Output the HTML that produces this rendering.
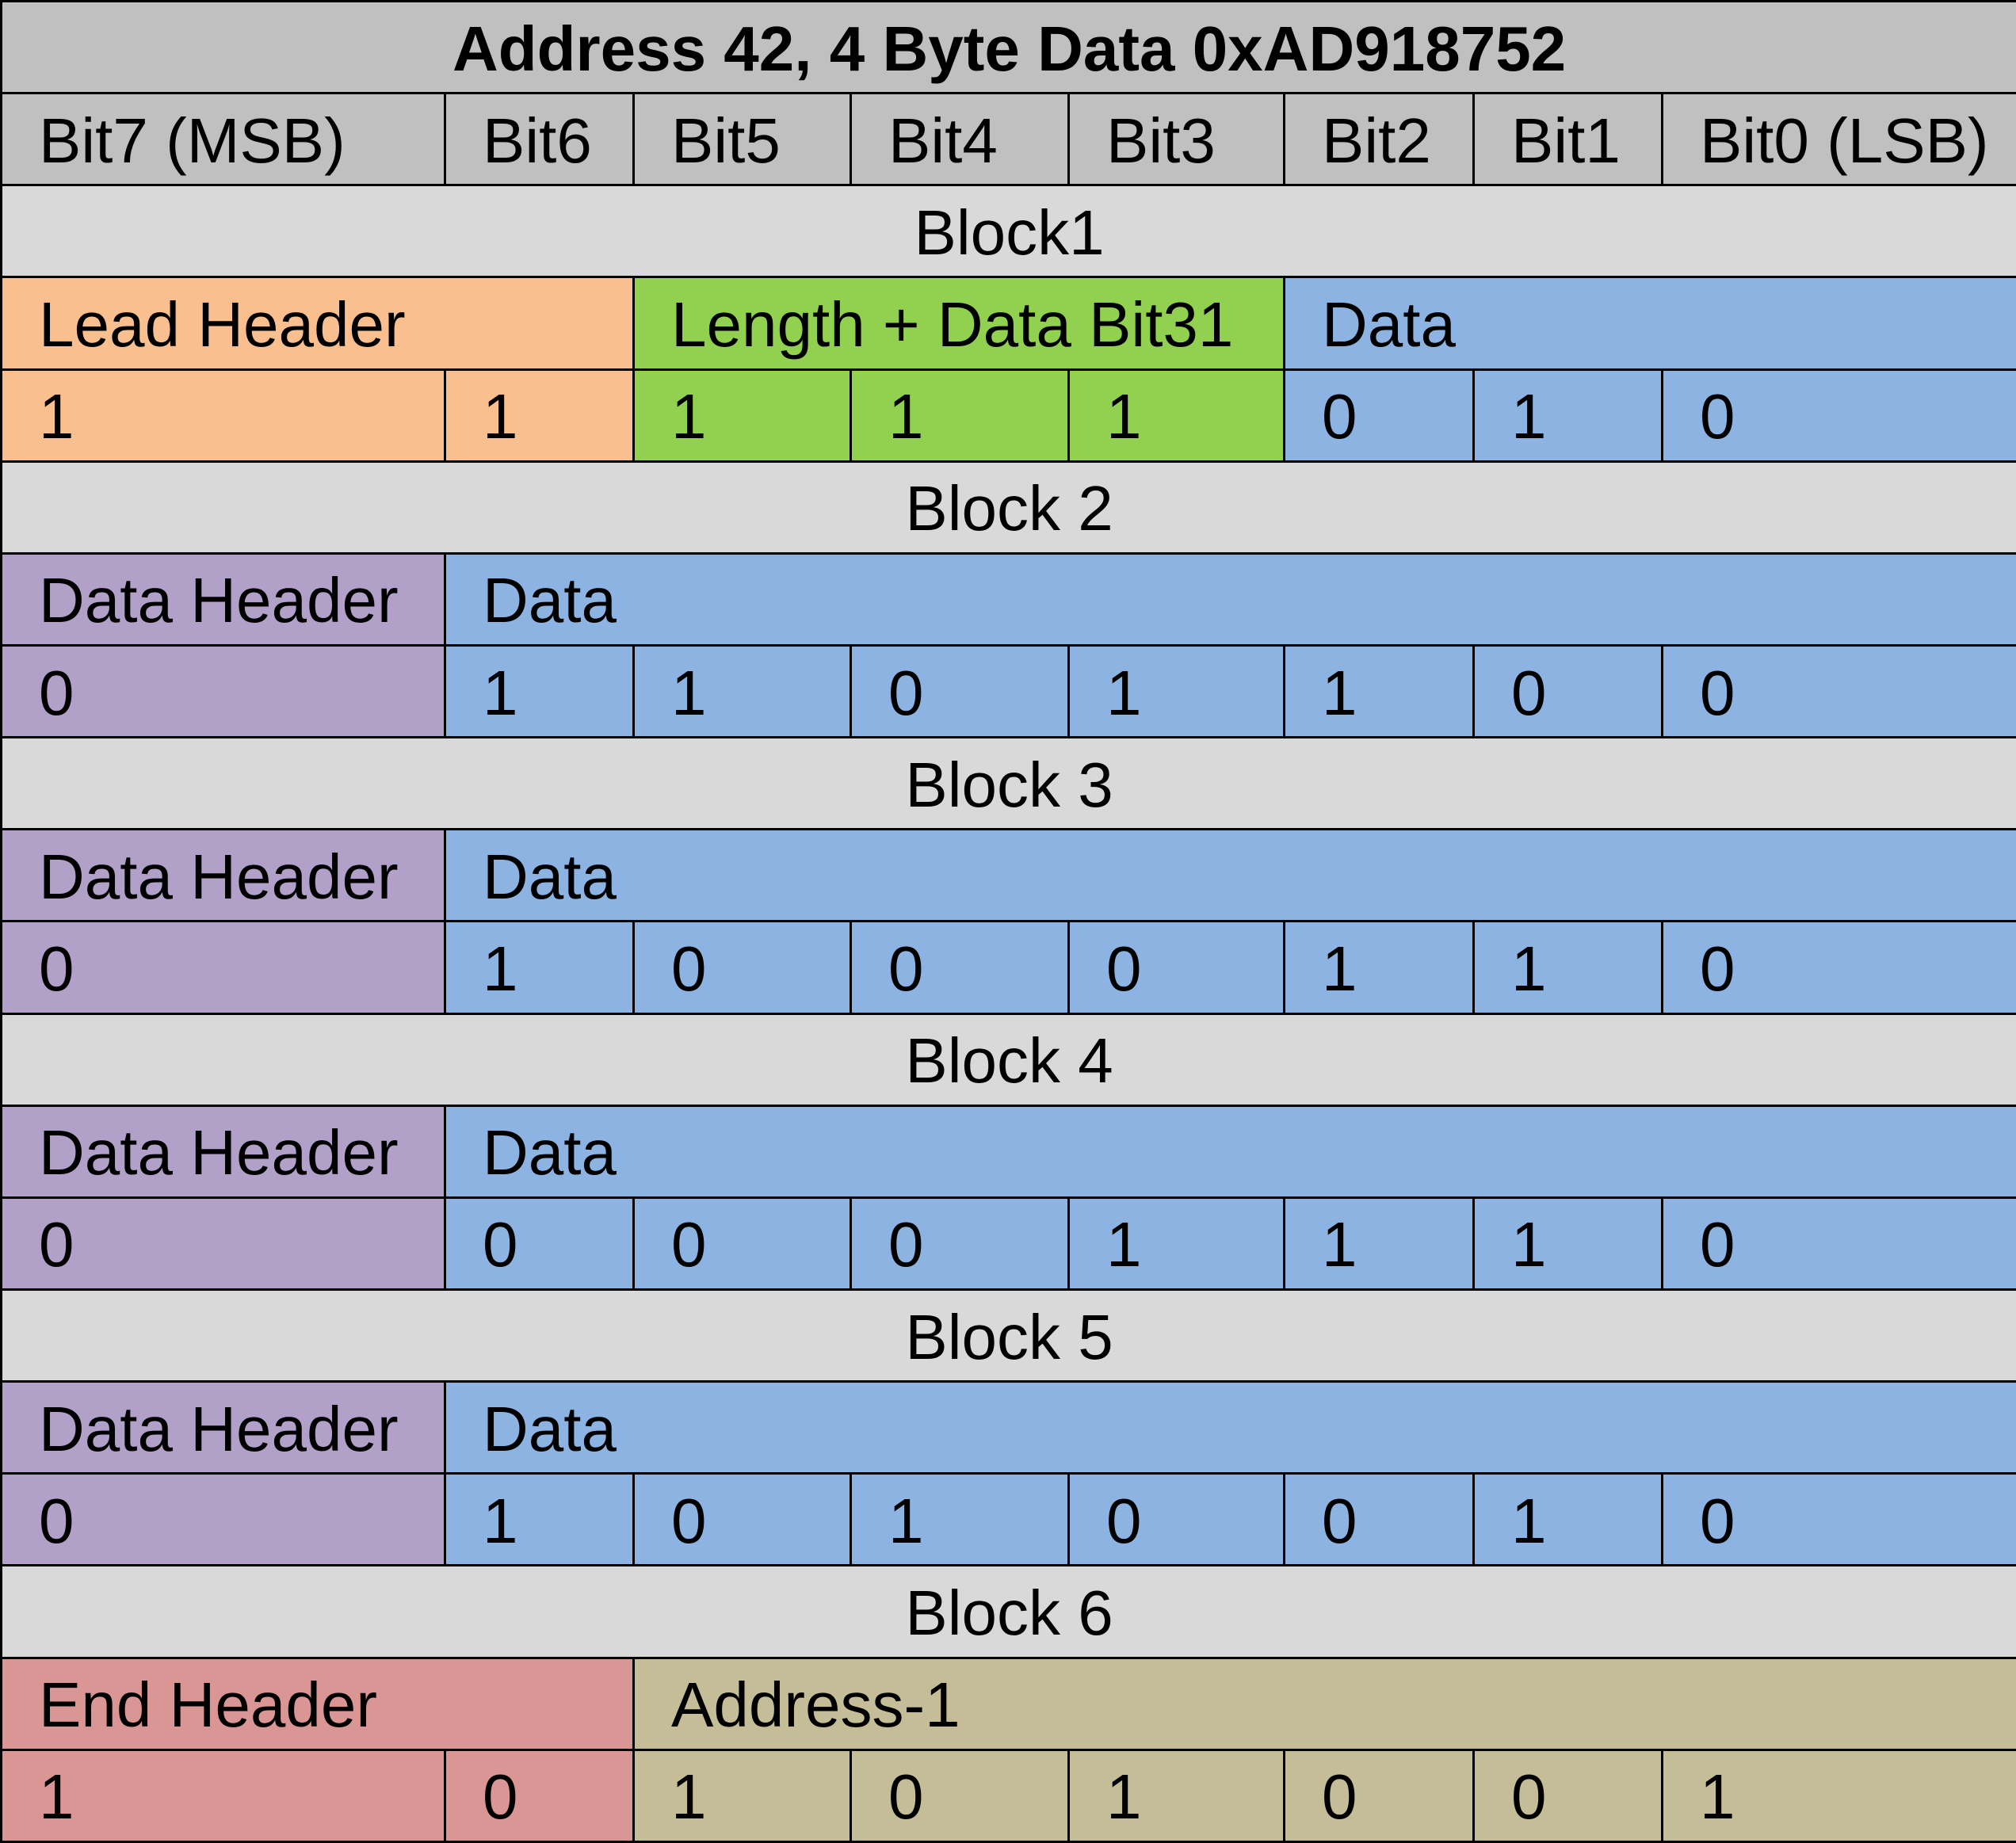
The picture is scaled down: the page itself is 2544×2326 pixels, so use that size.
<!DOCTYPE html>
<html><head><meta charset="utf-8"><style>
html,body{margin:0;padding:0;background:#fff;}
#w{width:2544px;height:2326px;overflow:hidden;}
table{border-collapse:collapse;table-layout:fixed;width:2544px;height:2326px;font-family:"Liberation Sans",sans-serif;font-size:80px;color:#000;}
td{border:3px solid #000;height:109px;padding:4px 0 0 46px;white-space:nowrap;overflow:hidden;line-height:1;}
.c{text-align:center;padding:4px 0 0 0;}
.t{background:#c0c0c0;font-weight:bold;}
.h{background:#c0c0c0;}
.b{background:#d9d9d9;}
.o{background:#f9bf8f;}
.g{background:#92d050;}
.u{background:#8db3e2;}
.p{background:#b1a0c7;}
.r{background:#da9694;}
.n{background:#c4bd97;}
</style></head><body><div id="w">
<table>
<colgroup><col style="width:560px"><col style="width:238px"><col style="width:274px"><col style="width:275px"><col style="width:272px"><col style="width:239px"><col style="width:238px"><col style="width:448px"></colgroup>
<tr><td colspan="8" class="c t">Address 42, 4 Byte Data 0xAD918752</td></tr>
<tr class="h"><td>Bit7 (MSB)</td><td>Bit6</td><td>Bit5</td><td>Bit4</td><td>Bit3</td><td>Bit2</td><td>Bit1</td><td>Bit0 (LSB)</td></tr>
<tr><td colspan="8" class="c b">Block1</td></tr>
<tr><td colspan="2" class="o">Lead Header</td><td colspan="3" class="g">Length + Data Bit31</td><td colspan="3" class="u">Data</td></tr>
<tr><td class="o">1</td><td class="o">1</td><td class="g">1</td><td class="g">1</td><td class="g">1</td><td class="u">0</td><td class="u">1</td><td class="u">0</td></tr>
<tr><td colspan="8" class="c b">Block 2</td></tr>
<tr><td class="p">Data Header</td><td colspan="7" class="u">Data</td></tr>
<tr><td class="p">0</td><td class="u">1</td><td class="u">1</td><td class="u">0</td><td class="u">1</td><td class="u">1</td><td class="u">0</td><td class="u">0</td></tr>
<tr><td colspan="8" class="c b">Block 3</td></tr>
<tr><td class="p">Data Header</td><td colspan="7" class="u">Data</td></tr>
<tr><td class="p">0</td><td class="u">1</td><td class="u">0</td><td class="u">0</td><td class="u">0</td><td class="u">1</td><td class="u">1</td><td class="u">0</td></tr>
<tr><td colspan="8" class="c b">Block 4</td></tr>
<tr><td class="p">Data Header</td><td colspan="7" class="u">Data</td></tr>
<tr><td class="p">0</td><td class="u">0</td><td class="u">0</td><td class="u">0</td><td class="u">1</td><td class="u">1</td><td class="u">1</td><td class="u">0</td></tr>
<tr><td colspan="8" class="c b">Block 5</td></tr>
<tr><td class="p">Data Header</td><td colspan="7" class="u">Data</td></tr>
<tr><td class="p">0</td><td class="u">1</td><td class="u">0</td><td class="u">1</td><td class="u">0</td><td class="u">0</td><td class="u">1</td><td class="u">0</td></tr>
<tr><td colspan="8" class="c b">Block 6</td></tr>
<tr><td colspan="2" class="r">End Header</td><td colspan="6" class="n">Address-1</td></tr>
<tr><td class="r">1</td><td class="r">0</td><td class="n">1</td><td class="n">0</td><td class="n">1</td><td class="n">0</td><td class="n">0</td><td class="n">1</td></tr>
</table></div>
</body></html>
